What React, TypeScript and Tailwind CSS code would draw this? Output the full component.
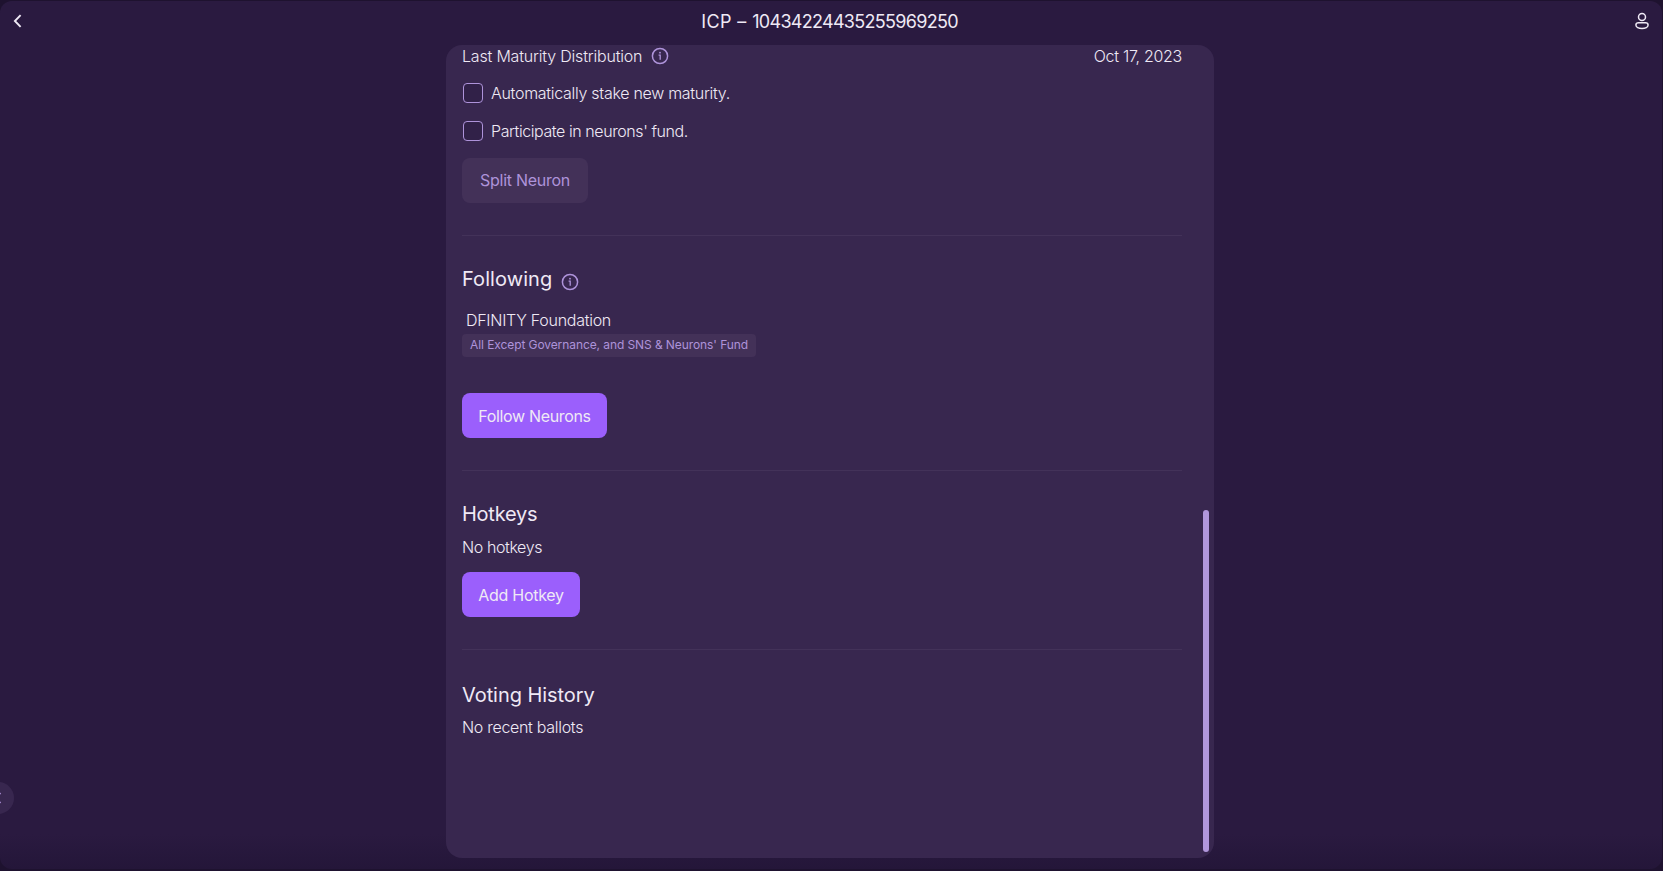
import React from "react";

function InfoIcon() {
  return (
    <svg width="18" height="18" viewBox="0 0 18 18" fill="none" className="shrink-0 text-[#ae93da]">
      <circle cx="9" cy="9" r="7.6" stroke="currentColor" strokeWidth="1.5" />
      <path d="M7.6 8.2h1.6v4.6" stroke="currentColor" strokeWidth="1.3" />
      <circle cx="9" cy="5.7" r="0.9" fill="currentColor" />
    </svg>
  );
}

function Check({ label, className }: { label: string; className: string }) {
  return (
    <label className="flex h-[38px] items-center gap-2">
      <span className="ml-px size-5 rounded-[4px] border border-[#ae93da] bg-[#312148]" />
      <span className={className}>{label}</span>
    </label>
  );
}

function Divider() {
  return <hr className="h-px border-0 bg-[#433259]" />;
}

export default function App() {
  return (
    <div className="h-[871px] w-full overflow-hidden bg-[#1e122f] pt-px pr-px pb-[2px] font-['Inter',sans-serif] text-base leading-6 font-[350] text-[#efe9f5]">
      <div className="relative flex h-full flex-col overflow-hidden rounded-xl bg-linear-to-b from-[#2a1a40] from-96% to-[#241639]">
        <header className="flex h-11 shrink-0 items-start justify-between pr-[13px] pl-[12px]">
          <svg width="12" height="16" viewBox="0 0 12 16" fill="none" className="mt-3 text-[#efe9f5]">
            <path d="M8.6 2.2L2.9 8L8.6 13.8" stroke="currentColor" strokeWidth="1.9" />
          </svg>
          <h1 className="mt-[7px] text-lg leading-7 font-normal tracking-[-0.7px]">
            <span className="tracking-[0.4px]">ICP – </span>10434224435255969250
          </h1>
          <svg width="14" height="18" viewBox="0 0 14 18" fill="none" className="mt-[11px] text-[#efe9f5]">
            <circle cx="7" cy="5" r="3.5" stroke="currentColor" strokeWidth="1.5" />
            <path
              d="M3.6 10.8h6.8c1.5 0 2.7.9 2.7 2.2 0 2-2.8 3.5-6.1 3.5S.9 15 .9 13c0-1.3 1.2-2.2 2.7-2.2z"
              stroke="currentColor"
              strokeWidth="1.5"
            />
          </svg>
        </header>

        <main className="relative ml-[446px] flex h-[813px] w-[768px] flex-col rounded-2xl bg-[#38274f] pr-8 pl-4">
          <div className="flex h-[22px] items-center justify-between">
            <div className="flex items-center gap-[9px]">
              <span className="tracking-[-0.19px]">Last Maturity Distribution</span>
              <InfoIcon />
            </div>
            <span className="tracking-[-0.3px]">Oct 17, 2023</span>
          </div>
          <div className="mt-[7px]">
            <Check label="Automatically stake new maturity." className="tracking-[-0.29px]" />
            <Check label="Participate in neurons' fund." className="tracking-[-0.42px]" />
          </div>
          <button className="mt-2 h-[45px] w-[126px] rounded-lg bg-[#433158] pb-0.5 font-normal tracking-[-0.27px] text-[#ae93da]">
            Split Neuron
          </button>

          <section className="mt-8">
            <Divider />
            <div className="mt-[29px] flex h-7 items-center gap-[9px]">
              <h2 className="text-xl font-normal tracking-[0.08px]">Following</h2>
              <span className="mt-[5px]">
                <InfoIcon />
              </span>
            </div>
            <p className="mt-[15px] ml-1 tracking-[-0.28px]">DFINITY Foundation</p>
            <div className="mt-[2px] flex h-[23px] w-[294px] items-center rounded bg-[#433158] px-2 pb-0.5 text-xs font-normal tracking-[-0.085px] whitespace-nowrap text-[#ae93da]">
              <span>All Except Governance, and SNS &amp; Neurons' Fund</span>
            </div>
            <button className="mt-9 h-[45px] w-[145px] rounded-lg bg-[#9b5ffc] font-normal tracking-[-0.34px]">
              Follow Neurons
            </button>
          </section>

          <section className="mt-8">
            <Divider />
            <h2 className="mt-[29px] text-xl leading-7 font-normal tracking-[-0.25px]">Hotkeys</h2>
            <p className="mt-[7px] tracking-[-0.4px]">No hotkeys</p>
            <button className="mt-[13px] h-[45px] w-[118px] rounded-lg bg-[#9b5ffc] font-normal tracking-[-0.26px]">
              Add Hotkey
            </button>
          </section>

          <section className="mt-8">
            <Divider />
            <h2 className="mt-[31px] text-xl leading-7 font-normal tracking-[-0.07px]">Voting History</h2>
            <p className="mt-[6px] tracking-[-0.3px]">No recent ballots</p>
          </section>

          <div className="absolute top-[465px] right-[5px] h-[342px] w-[6px] rounded-full bg-[#b197dc]" />
        </main>

        <div className="absolute top-[781px] left-[-18px] flex size-8 items-center justify-end rounded-full bg-[#38274f]">
          <svg width="14" height="14" viewBox="0 0 14 14" fill="none" className="text-[#ae93da]">
            <path d="M0.5 2L-4 7L0.5 12" stroke="currentColor" strokeWidth="1.5" />
          </svg>
        </div>
      </div>
    </div>
  );
}
